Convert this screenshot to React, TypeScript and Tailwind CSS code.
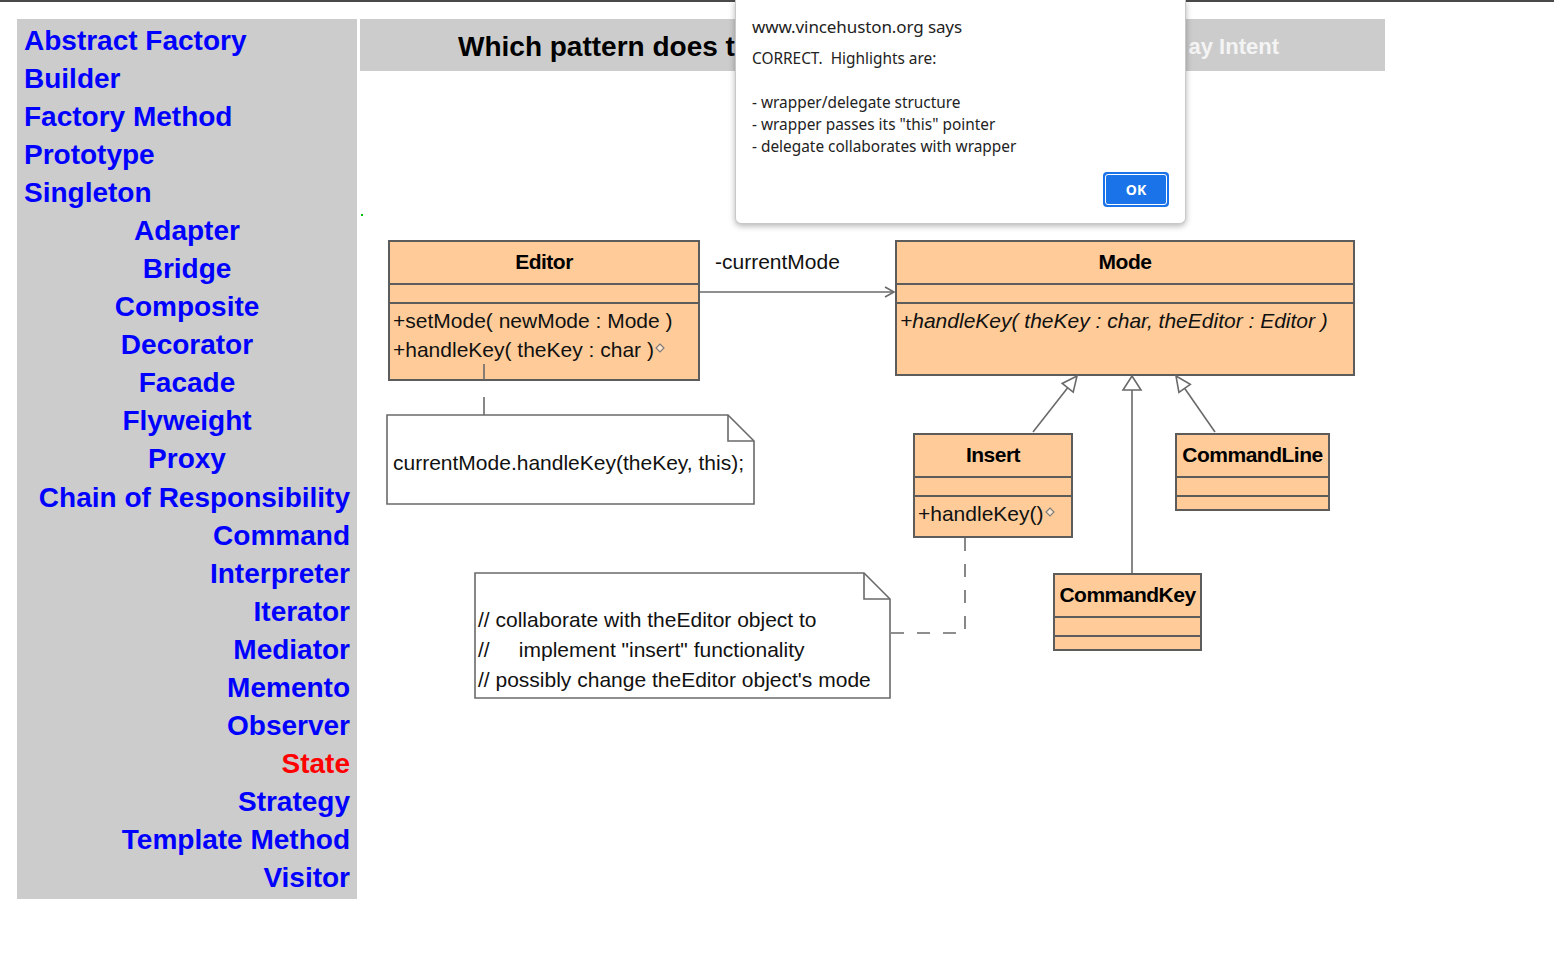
import React from "react";

const creational = ["Abstract Factory", "Builder", "Factory Method", "Prototype", "Singleton"];
const structural = ["Adapter", "Bridge", "Composite", "Decorator", "Facade", "Flyweight", "Proxy"];
const behavioral = [
  "Chain of Responsibility",
  "Command",
  "Interpreter",
  "Iterator",
  "Mediator",
  "Memento",
  "Observer",
  "State",
  "Strategy",
  "Template Method",
  "Visitor",
];

function Diamond() {
  return (
    <svg width="10" height="10" viewBox="0 0 10 10" className="inline-block align-middle mb-[6px] ml-[1px]">
      <path d="M5 1 L9 5 L5 9 L1 5 Z" fill="#ffe6cc" stroke="#7a7a7a" strokeWidth="1.1" />
    </svg>
  );
}

type BoxProps = {
  left: number;
  top: number;
  width: number;
  height: number;
  title: string;
  children?: React.ReactNode;
};

function ClassBox({ left, top, width, height, title, children }: BoxProps) {
  return (
    <div
      className="absolute flex flex-col border-2 border-[#5c5c5c] bg-[#ffcc99]"
      style={{ left, top, width, height }}
    >
      <div className="h-[43px] shrink-0 flex items-center justify-center pb-[1px] border-b-2 border-[#5c5c5c] font-bold text-[21px] tracking-[-0.5px] text-black">
        {title}
      </div>
      <div className="h-[19px] shrink-0 border-b-2 border-[#5c5c5c]" />
      <div className="flex-1 pl-[3px] pt-[2px] text-[21px] leading-[29px] text-[#111] whitespace-nowrap">{children}</div>
    </div>
  );
}

export default function App() {
  return (
    <div className="relative w-[1554px] h-[956px] bg-white overflow-hidden font-['Liberation_Sans',Arial,sans-serif]">
      <div className="h-[2px] bg-[#4a4a4a]" />
      <div className="flex items-start pt-[17px] pl-[17px] gap-[3px]">
        {/* Sidebar */}
        <div className="w-[340px] bg-[#cccccc] pt-[3px] pb-[2px] pr-[7px] pl-[7px] font-bold text-[28px] leading-[38px] text-[#0000ff]">
          <div className="flex flex-col items-start">
            {creational.map((n) => (
              <div key={n} className="whitespace-nowrap">{n}</div>
            ))}
          </div>
          <div className="flex flex-col items-center">
            {structural.map((n) => (
              <div key={n} className="whitespace-nowrap">{n}</div>
            ))}
          </div>
          <div className="flex flex-col items-end mt-[1px]">
            {behavioral.map((n) => (
              <div key={n} className={n === "State" ? "whitespace-nowrap text-[#ff0000]" : "whitespace-nowrap"}>
                {n}
              </div>
            ))}
          </div>
        </div>

        {/* Main */}
        <div className="flex flex-col">
          <div className="w-[1025px] h-[52px] bg-[#cccccc] flex items-center justify-between pl-[98px] pt-[3px]">
            <div className="w-[277px] overflow-hidden">
              <div className="font-bold text-[28px] text-black whitespace-nowrap">Which pattern does t</div>
            </div>
            <div className="w-[200px] overflow-hidden flex justify-end pr-[106px]">
              <div className="font-bold text-[22px] text-[#f4f4f4] whitespace-nowrap">ay Intent</div>
            </div>
          </div>

          {/* Diagram */}
          <div className="relative mt-[140px] w-[1000px] h-[500px]">
            <div className="absolute left-[1px] top-[3px] w-[2px] h-[2px] bg-[#00c000]" />
            <ClassBox left={28} top={29} width={312} height={141} title="Editor">
              <div>+setMode( newMode : Mode )</div>
              <div>
                +handleKey( theKey : char )<Diamond />
              </div>
            </ClassBox>
            <ClassBox left={535} top={29} width={460} height={136} title="Mode">
              <div className="italic">+handleKey( theKey : char, theEditor : Editor )</div>
            </ClassBox>
            <ClassBox left={553} top={222} width={160} height={105} title="Insert">
              <div>
                +handleKey()<Diamond />
              </div>
            </ClassBox>
            <ClassBox left={815} top={222} width={155} height={78} title="CommandLine" />
            <ClassBox left={693} top={362} width={149} height={78} title="CommandKey" />

            <svg className="absolute left-0 top-0" width="1000" height="500" viewBox="0 0 1000 500" fill="none">
              <g stroke="#6a6a6a" strokeWidth="1.6">
                {/* association */}
                <line x1="340" y1="81" x2="534" y2="81" />
                <polyline points="525,76 534,81 525,86" />
                {/* editor to note */}
                <line x1="124" y1="153" x2="124" y2="169" />
                <line x1="124" y1="186" x2="124" y2="204" />
                {/* note 1 */}
                <polygon points="27,204 368,204 394,230 394,293 27,293" fill="#ffffff" />
                <polyline points="368,204 368,230 394,230" />
                {/* note 2 */}
                <polygon points="115,362 504,362 530,388 530,487 115,487" fill="#ffffff" />
                <polyline points="504,362 504,388 530,388" />
                {/* dashed */}
                <polyline points="531,422 605,422 605,316" strokeDasharray="13 13" />
                {/* generalizations */}
                <line x1="673" y1="221" x2="707.7" y2="176.8" />
                <polygon points="717,165 713.2,181.1 702.2,172.5" fill="#ffffff" />
                <line x1="772" y1="179" x2="772" y2="362" />
                <polygon points="772,165 781,179 763,179" fill="#ffffff" />
                <line x1="855" y1="221" x2="824.6" y2="177.3" />
                <polygon points="816,165 830.3,173.3 818.9,181.3" fill="#ffffff" />
              </g>
            </svg>

            <div className="absolute left-[355px] top-[36px] text-[21px] leading-[30px] text-[#111] whitespace-nowrap">-currentMode</div>
            <div className="absolute left-[33px] top-[237px] text-[21px] leading-[30px] text-[#111] whitespace-nowrap">
              currentMode.handleKey(theKey, this);
            </div>
            <div className="absolute left-[118px] top-[394px] text-[21px] leading-[30px] text-[#111] whitespace-pre">
              {"// collaborate with theEditor object to\n//     implement \"insert\" functionality\n// possibly change theEditor object's mode"}
            </div>
          </div>
        </div>
      </div>

      {/* Alert dialog */}
      <div className="absolute left-[735px] top-0 w-[451px] h-[224px] bg-white rounded-b-[6px] border border-t-0 border-[#c8c8c8] shadow-[0_2px_6px_rgba(0,0,0,0.3)] font-['Noto_Sans',sans-serif] text-[#222]">
        <div className="pl-[16px] pt-[14px] text-[17px] leading-[26px] tracking-[-0.1px]">www.vincehuston.org says</div>
        <div className="pl-[16px] pt-[8px] text-[15.4px] leading-[22px] whitespace-pre">
          {"CORRECT.  Highlights are:\n\n- wrapper/delegate structure\n- wrapper passes its \"this\" pointer\n- delegate collaborates with wrapper"}
        </div>
        <div className="absolute right-[16px] top-[172px] w-[66px] h-[35px] rounded-[4px] bg-[#1a73e8] p-[2px]">
          <div className="w-full h-full rounded-[3px] border border-white flex items-center justify-center text-white font-bold text-[14px]">
            OK
          </div>
        </div>
      </div>
    </div>
  );
}
